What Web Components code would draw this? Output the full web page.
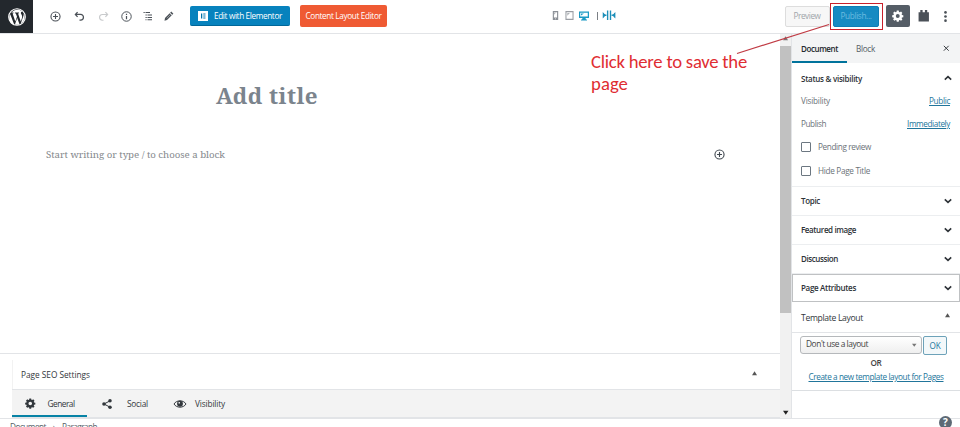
<!DOCTYPE html>
<html lang="en"><head><meta charset="utf-8"><title>Edit Page</title>
<style>html,body{margin:0;height:427px;overflow:hidden;background:#fff}</style></head>
<body><page-editor></page-editor>
<script>
const define = (name, html, init) => customElements.define(name, class extends HTMLElement {
  connectedCallback() {
    if (this.shadowRoot) return;
    this.attachShadow({mode: 'open'}).innerHTML = html;
    if (init) init(this, this.shadowRoot);
  }
});

/* Text run tracked to a given width: <ui-text w="60"> */
define('ui-text', `<style>:host{display:block;white-space:nowrap;flex:none}span{display:inline-block;text-decoration:inherit}</style><span><slot></slot></span>`, (el, root) => {
  const s = root.querySelector('span'), w = +el.getAttribute('w');
  if (w) {
    const n = el.textContent.length;
    s.style.letterSpacing = ((w - s.getBoundingClientRect().width) / n) + 'px';
    el.style.width = w + 'px';
  }
});

const gear = '<path fill="currentColor" fill-rule="evenodd" d="M8.3 1h3.4l.5 2.4 1.5.6 2-1.4 2.4 2.4-1.4 2 .6 1.5 2.4.5v3.4l-2.4.5-.6 1.5 1.4 2-2.4 2.4-2-1.4-1.5.6-.5 2.4H8.300l-.5-2.400-1.500-.600-2 1.400-2.400-2.400 1.400-2-.600-1.500-2.400-.500V9l2.400-.5.600-1.500-1.400-2 2.400-2.400 2 1.400 1.500-.600zM10 7a3.400 3.400 0 100 6.800A3.400 3.400 0 0010 7z"/>';
const icons = {
  plus: '<g fill="none" stroke="currentColor" stroke-width="2"><circle cx="10" cy="10" r="8.300"/><path d="M10 5.500v9M5.500 10h9"/></g>',
  info: '<g fill="none" stroke="currentColor" stroke-width="1.800"><circle cx="10" cy="10" r="8.600"/><path d="M10 9v6M10 5v2.200" stroke-width="2.200"/></g>',
  undo: '<path fill="none" stroke="currentColor" stroke-width="2.300" d="M6.500 2L2.500 6.300l4 4.300M3 6.300h9c7 0 6.800 10 0 10.500h-2"/>',
  redo: '<path fill="none" stroke="currentColor" stroke-width="2.100" d="M13.500 2l4 4.300-4 4.300M17 6.300H8c-7 0-6.800 10 0 10.500h2"/>',
  list: '<path stroke="currentColor" stroke-width="2.200" d="M1 3h2.500M5 3h9M5 8h2.500M9 8h9M5 13h2.500M9 13h9M5 17.500h2M9 17.500h9"/>',
  pencil: '<path fill="currentColor" d="M14.500 1.200l4.300 4.300-2.200 2.200-4.300-4.300zM11.300 4.500l4.200 4.200L6 18.200l-5 1.100 1-5.200z"/><path d="M5.500 14.500l7.500-7.500" stroke="#fff" stroke-width=".8"/>',
  elementor: '<path fill="#fff" d="M0 0h20v20H0z"/><path fill="#0073aa" d="M6 5h2.500v10H6zM10.500 5H15v2.200h-4.500zM10.500 8.900H15v2.200h-4.500zM10.500 12.800H15V15h-4.500z"/>',
  phone: '<path fill="#8b9096" fill-rule="evenodd" d="M4 0h12v20H4zM6.500 3v11.500h7V3zM9 16.500v1.700h2v-1.700z"/><path fill="#a9adb2" d="M7 3.500h4l-4 5z"/>',
  tablet: '<path fill="#999da3" fill-rule="evenodd" d="M1 0h18v20H1zM3.300 2.500v14.500h13.400V2.500z"/><path fill="#b0b4b8" d="M5 4.500h6l-6 6z"/>',
  desktop: '<path fill="#1d9ac4" fill-rule="evenodd" d="M0 1h20v13h-7l1 3h2v2H4v-2h2l1-3H0zM2.500 3.500v7.700h15V3.500z"/><path fill="#1d9ac4" d="M4 5h6l-6 4z"/>',
  width: '<path fill="#1d8fb9" d="M7.500 1h2.600v18H7.500zM13 1h2.600v18H13zM0 5L4.500 10 0 15zM3 8.700h3.500v2.600H3zM23 5L18.500 10l4.500 5zM16.500 8.700H20v2.600h-3.500z"/><path fill="#1d8fb9" d="M-.5 4L5 10l-5.500 6zM23.500 4L18 10l5.500 6z"/>',
  gear,
  plugin: '<path fill="currentColor" d="M1 4h3V0h4v4h4V0h4v4h3v16H1z"/>',
  dots: '<g fill="currentColor"><circle cx="10" cy="2.500" r="2.400"/><circle cx="10" cy="10" r="2.400"/><circle cx="10" cy="17.500" r="2.400"/></g>',
  close: '<path stroke="currentColor" stroke-width="3" d="M2.500 2.500l15 15M17.500 2.500l-15 15"/>',
  up: '<path fill="none" stroke="currentColor" stroke-width="4" d="M2 14l8-7.500 8 7.500"/>',
  down: '<path fill="none" stroke="currentColor" stroke-width="4" d="M2 6l8 7.500L18 6"/>',
  triup: '<path fill="currentColor" d="M0 17L10 1l10 16z"/>',
  tridown: '<path fill="currentColor" d="M0 3l10 14L20 3z"/>',
  share: '<g fill="currentColor"><circle cx="4" cy="10" r="3.600"/><circle cx="16" cy="3.700" r="3.500"/><circle cx="16" cy="16.300" r="3.500"/></g><path fill="none" stroke="currentColor" stroke-width="2" d="M16 3.700L4 10l12 6.300"/>',
  eye: '<path fill="none" stroke="currentColor" stroke-width="2" d="M0 10C5 1.500 19 1.500 24 10 19 18.500 5 18.500 0 10z"/><circle cx="12" cy="9.500" r="5.800" fill="currentColor"/><circle cx="10.500" cy="7.500" r="1.700" fill="#fff"/>',
  wp: '<circle cx="10" cy="10" r="9.200" fill="none" stroke="#fff" stroke-width="1.300"/><path fill="#fff" d="M2.500 7l4.600 12-1.900-.9C.5 15.500 1 10 2.500 7zM3.300 5.800C6.500 1 13 1 16 4c-1.500 0-2 1.300-1.500 2.400.6 1.300 1.700 2.400 1 4.600l-1.300 4-3-9 1-.2v-.7H7.700v.7l1 .2 1.300 3.600-1.900 5.400-3-9 1-.2v-.7H3.300zM10.200 11l2.700 7.300a8.500 8.500 0 01-5.200 0zM17.500 6c1.700 4 .8 8.800-3.300 11.300l2.700-7.800c.5-1.500.7-2.500.6-3.500z"/>'
};
/* <ui-icon n="gear" s="11"> ; wide glyphs keep a 24-unit box */
define('ui-icon', `<style>:host{display:block;flex:none}svg{display:block;overflow:visible}</style>`, (el, root) => {
  const n = el.getAttribute('n'), s = +el.getAttribute('s'), vw = n === 'width' ? 23 : n === 'eye' ? 24 : 20;
  root.innerHTML += `<svg width="${s * vw / 20}" height="${s}" viewBox="0 0 ${vw} 20">${icons[n]}</svg>`;
});

define('editor-toolbar', `<style>
:host{display:flex;align-items:center;height:33px;box-sizing:border-box;color:#4b5158;font-size:8.200px;line-height:12px;background:#fff}
.wp{width:33px;height:33px;background:#23282d;display:grid;place-items:center;margin-right:16.500px}
.btn{display:flex;align-items:center;justify-content:center;box-sizing:border-box;border-radius:2px;color:#fff;flex:none;margin-top:-1px}
.tools,.devices,.right{display:flex;align-items:center;margin-top:-1px}
.edit{width:100px;height:20px;background:#0782bd;border-bottom:1px solid #006799;gap:6px;margin-left:16px}
.lay{width:87px;height:22px;background:#ef5a33;margin-left:10px}
.devices{margin-left:164px;margin-top:-2px}.bar{width:1px;height:8px;background:#7b8085;margin:0 5px 0 8px}
.right{margin-left:auto;height:33px;margin-top:-1px}
.pre{width:45px;height:21px;background:#f7f7f7;border:1px solid #ddd;color:#a0a5aa;margin:0}
.red{width:53px;height:27px;border:1.500px solid #c9202b;box-sizing:border-box;display:grid;place-items:center;margin-right:3px}
.pub{width:46px;height:21px;background:#168ac2;color:#6dbce0;margin:0;border:1px solid #0e7db5}
.set{width:24px;height:22px;background:#555d66;margin:0}
</style><div class="wp"><ui-icon n="wp" s="18"></ui-icon></div>
<div class="tools"><ui-icon n="plus" s="11"></ui-icon><ui-icon n="undo" s="11" style="margin-left:13px"></ui-icon><ui-icon n="redo" s="11" style="margin-left:13px;color:#c8cacc"></ui-icon><ui-icon n="info" s="11" style="margin-left:12px"></ui-icon><ui-icon n="list" s="10" style="margin-left:11px"></ui-icon><ui-icon n="pencil" s="10" style="margin-left:11.500px"></ui-icon></div>
<div class="btn edit"><ui-icon n="elementor" s="10"></ui-icon><ui-text w="68">Edit with Elementor</ui-text></div>
<div class="btn lay"><ui-text w="76">Content Layout Editor</ui-text></div>
<div class="devices"><ui-icon n="phone" s="9"></ui-icon><ui-icon n="tablet" s="9" style="margin-left:5px"></ui-icon><ui-icon n="desktop" s="10" style="margin-left:5px"></ui-icon><div class="bar"></div><ui-icon n="width" s="10.500"></ui-icon></div>
<div class="right"><div class="btn pre"><ui-text w="27">Preview</ui-text></div><div class="red"><div class="btn pub"><ui-text w="31">Publish...</ui-text></div></div><div class="btn set"><ui-icon n="gear" s="11.500"></ui-icon></div><ui-icon n="plugin" s="11.500" style="margin-left:8px"></ui-icon><ui-icon n="dots" s="11" style="margin:0 9px 0 11px"></ui-icon></div>`);

define('editor-canvas', `<style>
:host{display:flex;flex-direction:column;overflow:hidden;font-size:8.300px;line-height:12px;color:#32373c}
.doc{height:319px;box-sizing:border-box;font-family:"Noto Serif","DejaVu Serif Condensed","DejaVu Serif",serif}
.title{padding:45px 0 0 216px;height:76px;box-sizing:border-box;color:#7b848d;font-size:22.400px;font-weight:700;line-height:34px}
.para{display:flex;justify-content:space-between;align-items:center;padding:35.500px 55px 0 46px;color:#85898d;font-size:9.700px;line-height:17px}
.meta{border-top:1px solid #e2e4e7;padding:6px 0 0 12px;height:65px;box-sizing:border-box}
.head{height:29px;display:flex;align-items:center;justify-content:space-between;padding:0 23px 0 8px;border-left:1px solid #f2f2f2;box-sizing:border-box}
.tabs{height:29px;box-sizing:border-box;background:#f3f3f3;border:solid #e2e4e7;border-width:1px 0;display:flex;align-items:center}
.tab{display:flex;align-items:center;height:27px;box-sizing:border-box;flex:none}
.on{width:75px;border-bottom:2px solid #0782a5;padding-left:13px;gap:12px;padding-top:2px}
</style><div class="doc"><div class="title"><ui-text w="102">Add title</ui-text></div>
<div class="para"><ui-text w="179">Start writing or type / to choose a block</ui-text><ui-icon n="plus" s="11" style="color:#3f474f"></ui-icon></div></div>
<div class="meta"><div class="head"><ui-text w="69">Page SEO Settings</ui-text><ui-icon n="triup" s="5" style="color:#555;margin-top:-3px"></ui-icon></div>
<div class="tabs"><div class="tab on"><ui-icon n="gear" s="10.500"></ui-icon><ui-text w="27">General</ui-text></div><div class="tab" style="gap:15px;margin-left:15px"><ui-icon n="share" s="10"></ui-icon><ui-text w="21">Social</ui-text></div><div class="tab" style="gap:9px;margin-left:26px"><ui-icon n="eye" s="10"></ui-icon><ui-text w="30">Visibility</ui-text></div></div></div>`);

define('scroll-bar', `<style>:host{display:flex;flex-direction:column;justify-content:space-between;background:#f1f1f1;border-right:1px solid #e2e4e7;box-sizing:border-box;padding:2px 0 3px;align-items:center;color:#777}
.thumb{width:10.500px;height:267px;background:#c1c1c1;margin:5px 0 auto}</style><ui-icon n="triup" s="5"></ui-icon><div class="thumb"></div><ui-icon n="tridown" s="5.500" style="color:#222"></ui-icon>`);

define('panel-row', `<style>:host{display:flex;align-items:center;justify-content:space-between;box-sizing:border-box;height:29px;padding:0 8.500px 0 9px;border-bottom:1.500px solid #eceef0;color:#2d3237;font-weight:600;font-size:8px}</style><slot></slot>`);

define('settings-sidebar', `<style>
:host{display:block;font-size:8.200px;line-height:12px;color:#6b7278;background:#fff}
.tabs{height:29px;background:#f3f4f5;display:flex;align-items:stretch}
.tab{display:flex;align-items:center;box-sizing:border-box;padding:1px 9px 0;color:#555d66}
.on{border-bottom:2px solid #00739c;color:#23282d;font-weight:600;font-size:8px;width:55px;padding-top:2px}
.line{display:flex;align-items:center;justify-content:space-between;padding:0 10px 0 9px;height:22.500px}
.a{color:#21759b;text-decoration:underline;text-underline-offset:1.200px;text-decoration-thickness:1px}
.check{display:flex;align-items:center;gap:7px;padding-left:9px;height:24px}
.box{width:10px;height:10px;box-sizing:border-box;border:1.300px solid #6c7781;border-radius:1px}
.form{border-bottom:1px solid #dcdfe2;height:58px;box-sizing:border-box;padding:3px 0 0}
.pick{display:flex;gap:1px;padding-left:8px;height:19px}
.sel{width:122px;height:18px;box-sizing:border-box;border:1px solid #b5b8bb;border-radius:3px;background:linear-gradient(#fff,#efefef);display:flex;align-items:center;justify-content:space-between;padding:0 5px;color:#444;font-size:8.400px}
.ok{width:24px;height:19px;box-sizing:border-box;border:1px solid #6da2b9;border-radius:2px;background:#f3f8fa;color:#21759b;display:flex;align-items:center;justify-content:center}
.c{display:flex;justify-content:center;height:14px;align-items:center}
</style><div class="tabs"><div class="tab on"><ui-text w="37">Document</ui-text></div><div class="tab"><ui-text w="19">Block</ui-text></div><ui-icon n="close" s="6.500" style="margin:11px 11px 0 auto;color:#32373c"></ui-icon></div>
<panel-row style="height:27px;border:0"><ui-text w="61" style="padding-top:4px">Status &amp; visibility</ui-text><ui-icon n="up" s="8" style="padding-top:3px"></ui-icon></panel-row>
<div class="line"><ui-text w="29">Visibility</ui-text><ui-text class="a" w="21">Public</ui-text></div>
<div class="line"><ui-text w="25">Publish</ui-text><ui-text class="a" w="43">Immediately</ui-text></div>
<div class="check"><div class="box"></div><ui-text w="53">Pending review</ui-text></div>
<div class="check"><div class="box"></div><ui-text w="52">Hide Page Title</ui-text></div>
<div style="height:3px;border-bottom:1.500px solid #eceef0"></div>
<panel-row><ui-text w="19">Topic</ui-text><ui-icon n="down" s="8"></ui-icon></panel-row>
<panel-row><ui-text w="55">Featured image</ui-text><ui-icon n="down" s="8"></ui-icon></panel-row>
<panel-row><ui-text w="37">Discussion</ui-text><ui-icon n="down" s="8"></ui-icon></panel-row>
<panel-row style="border:1px solid #bfc1c3;padding:0 7.500px 0 8px;height:28px"><ui-text w="55">Page Attributes</ui-text><ui-icon n="down" s="8"></ui-icon></panel-row>
<panel-row style="height:31px;border-bottom:1px solid #e2e4e7;font-weight:400;color:#32373c;padding-right:10px"><ui-text w="62" style="font-size:8.600px;padding-top:2px">Template Layout</ui-text><ui-icon n="triup" s="5" style="color:#555;margin-top:-3px"></ui-icon></panel-row>
<div class="form"><div class="pick"><div class="sel"><ui-text w="62" style="margin-top:-2px">Don't use a layout</ui-text><ui-icon n="tridown" s="4.500" style="color:#777"></ui-icon></div><div class="ok"><ui-text w="11">OK</ui-text></div></div>
<div class="c" style="color:#444;font-weight:600;padding-top:1px"><ui-text w="11">OR</ui-text></div><div class="c"><ui-text class="a" w="135">Create a new template layout for Pages</ui-text></div></div>`);

define('page-editor', `<style>
:host{display:grid;position:relative;width:960px;height:427px;overflow:hidden;grid-template:33px 1fr 9px / 780px 12px 168px;background:#fff;font-family:"Open Sans","Noto Sans",sans-serif}
editor-toolbar{grid-column:1/-1}
editor-canvas,scroll-bar,settings-sidebar{border-top:1px solid #e2e4e7}
footer{grid-column:1/-1;border-top:1px solid #e2e4e7;display:flex;padding:2px 0 0 10px;gap:4.500px;font-size:8.200px;line-height:12px;color:#555d66;background:#fff}
.note{position:absolute;left:591px;top:51px;color:#df2d32;font:18.700px/22px Carlito,Lato,sans-serif}
.arrow{position:absolute;left:0;top:0;pointer-events:none}
.help{position:absolute;left:939px;top:416px;width:13px;height:13px;border-radius:50%;background:#5d6975;color:#fff;font-weight:700;font-size:10px;line-height:13px;text-align:center}
</style><editor-toolbar></editor-toolbar><editor-canvas></editor-canvas><scroll-bar></scroll-bar><settings-sidebar></settings-sidebar>
<footer><ui-text w="36">Document</ui-text><span style="width:7px;text-align:center">›</span><ui-text w="35">Paragraph</ui-text></footer>
<div class="note"><ui-text w="156">Click here to save the</ui-text><ui-text w="37">page</ui-text></div>
<svg class="arrow" width="960" height="60"><path d="M737 53.500L829 24.500" stroke="#c03a43" stroke-width="1.200"/></svg>
<div class="help">?</div>`);
</script></body></html>
